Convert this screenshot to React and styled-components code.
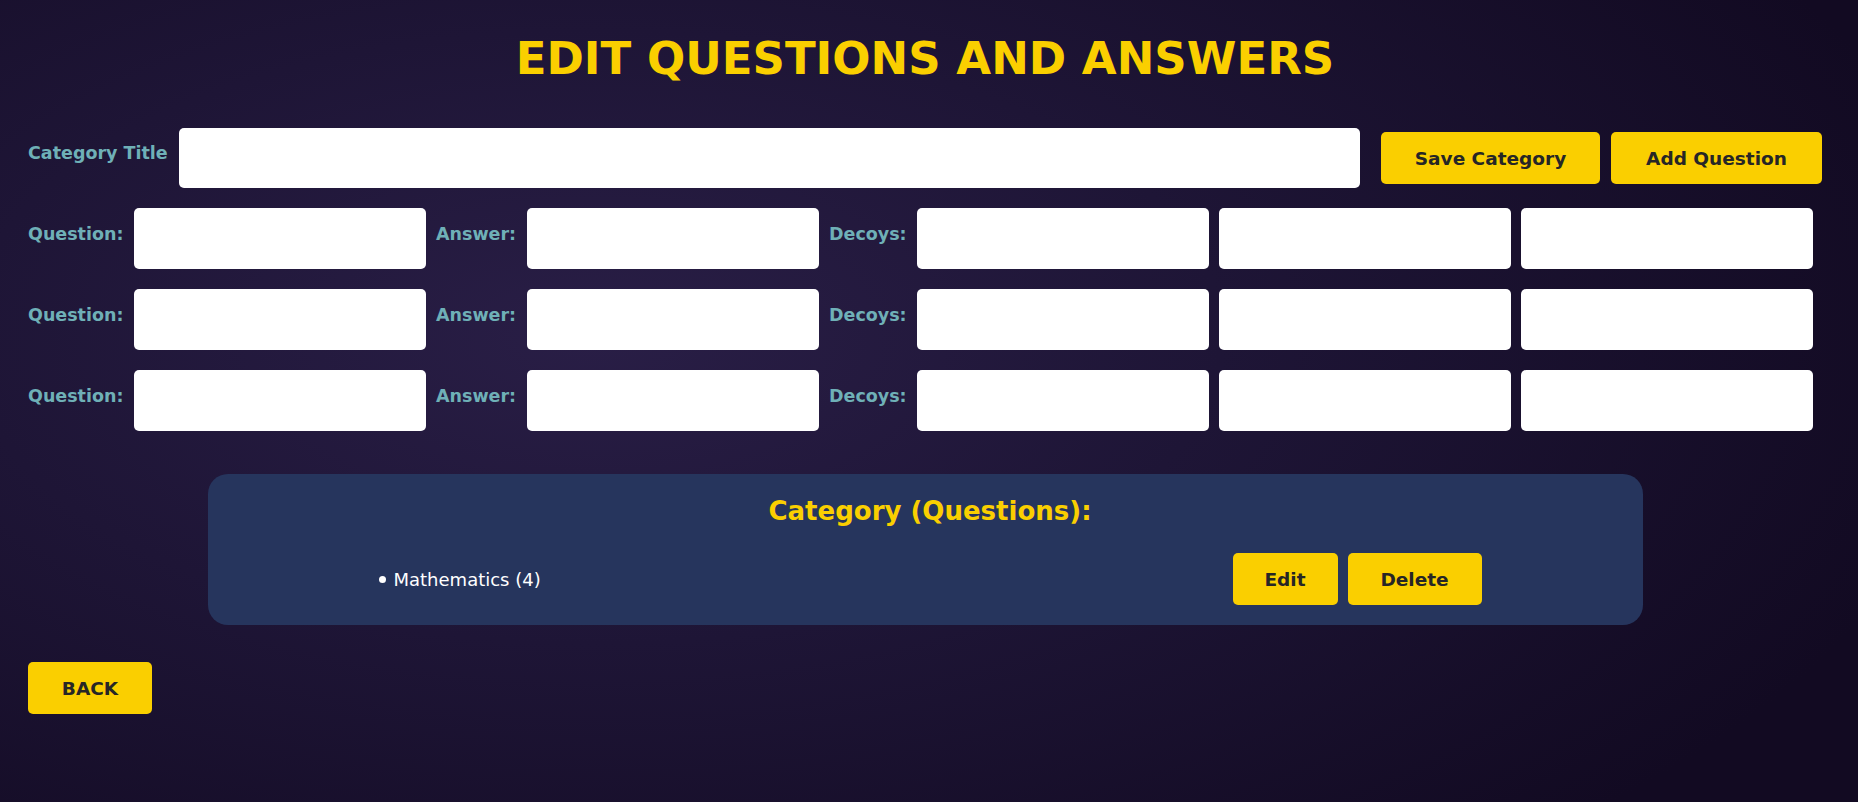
import React, { useState } from 'react';
import styled, { createGlobalStyle } from 'styled-components';

const GlobalStyle = createGlobalStyle`
    html, body {
        margin: 0;
        padding: 0;
    }
    body {
        font-family: "DejaVu Sans", "Liberation Sans", sans-serif;
        background: #120a22;
    }
`

const Page = styled.div`
    min-height: 100vh;
    box-sizing: border-box;
    padding: 30px 36px 40px 28px;
    background: radial-gradient(ellipse 75% 85% at 32% 42%, #291e46 0%, #1e1536 45%, #120a22 100%);
`
const Title = styled.h1`
    margin: 0;
    text-align: center;
    font-size: 45px;
    line-height: 58px;
    font-weight: 800;
    color: #facf00;
`
const TitleRow = styled.div`
    display: flex;
    align-items: center;
    gap: 11px;
    margin-top: 40px;
`
const Label = styled.label`
    flex: none;
    width: ${p => p.$w}px;
    padding-bottom: 10px;
    font-size: 17.5px;
    font-weight: 700;
    color: #6fb0b7;
    white-space: nowrap;
`
const Field = styled.input`
    box-sizing: border-box;
    height: ${p => (p.$grow ? '60px' : '61px')};
    width: ${p => (p.$grow ? 'auto' : '292px')};
    flex: ${p => (p.$grow ? '1' : 'none')};
    border: none;
    border-radius: 5px;
    background: #fff;
    padding: 0 12px;
    font-size: 16px;
    outline: none;
`
const ButtonGroup = styled.div`
    display: flex;
    gap: 11px;
    margin-left: 10px;
`
const Button = styled.button`
    box-sizing: border-box;
    width: ${p => p.$w}px;
    height: 52px;
    border: none;
    border-radius: 5px;
    background: #facf00;
    color: #262626;
    font-family: inherit;
    font-size: 18.5px;
    font-weight: 700;
    cursor: pointer;
    &:hover{
        background: #ffd91a;
    }
`
const Rows = styled.div`
    display: flex;
    flex-direction: column;
    gap: 20px;
    margin-top: 20px;
`
const QuestionRow = styled.div`
    display: flex;
    align-items: center;
    gap: 10px;
`
const Panel = styled.section`
    box-sizing: border-box;
    width: 1435px;
    margin: 43px auto 0;
    padding: 21px 0 20px 10px;
    border-radius: 20px;
    background: #26355d;
`
const PanelTitle = styled.h2`
    margin: 0 0 26px;
    text-align: center;
    font-size: 26px;
    line-height: 32px;
    font-weight: 700;
    color: #facf00;
`
const List = styled.ul`
    margin: 0;
    padding: 0;
    list-style: none;
`
const Item = styled.li`
    display: flex;
    align-items: center;
    justify-content: space-between;
    width: 1103px;
    margin: 0 auto;
`
const ItemName = styled.span`
    display: flex;
    align-items: center;
    gap: 8px;
    font-size: 18px;
    color: #fff;
    &::before{
        content: "";
        width: 7px;
        height: 7px;
        border-radius: 50%;
        background: #fff;
    }
`
const ItemButtons = styled.div`
    display: flex;
    gap: 10px;
`
const BackRow = styled.div`
    margin-top: 37px;
`

const QuestionLine = () => (
    <QuestionRow>
        <Label $w={96}>Question:</Label>
        <Field />
        <Label $w={81}>Answer:</Label>
        <Field />
        <Label $w={78}>Decoys:</Label>
        <Field />
        <Field />
        <Field />
    </QuestionRow>
);

const App = () => {
    const [title, setTitle] = useState('');
    const categories = [{ name: 'Mathematics', count: 4 }];
    return(
        <Page>
            <GlobalStyle />
            <Title>EDIT QUESTIONS AND ANSWERS</Title>
            <TitleRow>
                <Label $w={140}>Category Title</Label>
                <Field $grow value={title} onChange={e => setTitle(e.target.value)} />
                <ButtonGroup>
                    <Button $w={219}>Save Category</Button>
                    <Button $w={211}>Add Question</Button>
                </ButtonGroup>
            </TitleRow>
            <Rows>
                <QuestionLine />
                <QuestionLine />
                <QuestionLine />
            </Rows>
            <Panel>
                <PanelTitle>Category (Questions):</PanelTitle>
                <List>
                    {categories.map(c => (
                        <Item key={c.name}>
                            <ItemName>{c.name} ({c.count})</ItemName>
                            <ItemButtons>
                                <Button $w={105}>Edit</Button>
                                <Button $w={134}>Delete</Button>
                            </ItemButtons>
                        </Item>
                    ))}
                </List>
            </Panel>
            <BackRow>
                <Button $w={124}>BACK</Button>
            </BackRow>
        </Page>
    );
};
export default App;
